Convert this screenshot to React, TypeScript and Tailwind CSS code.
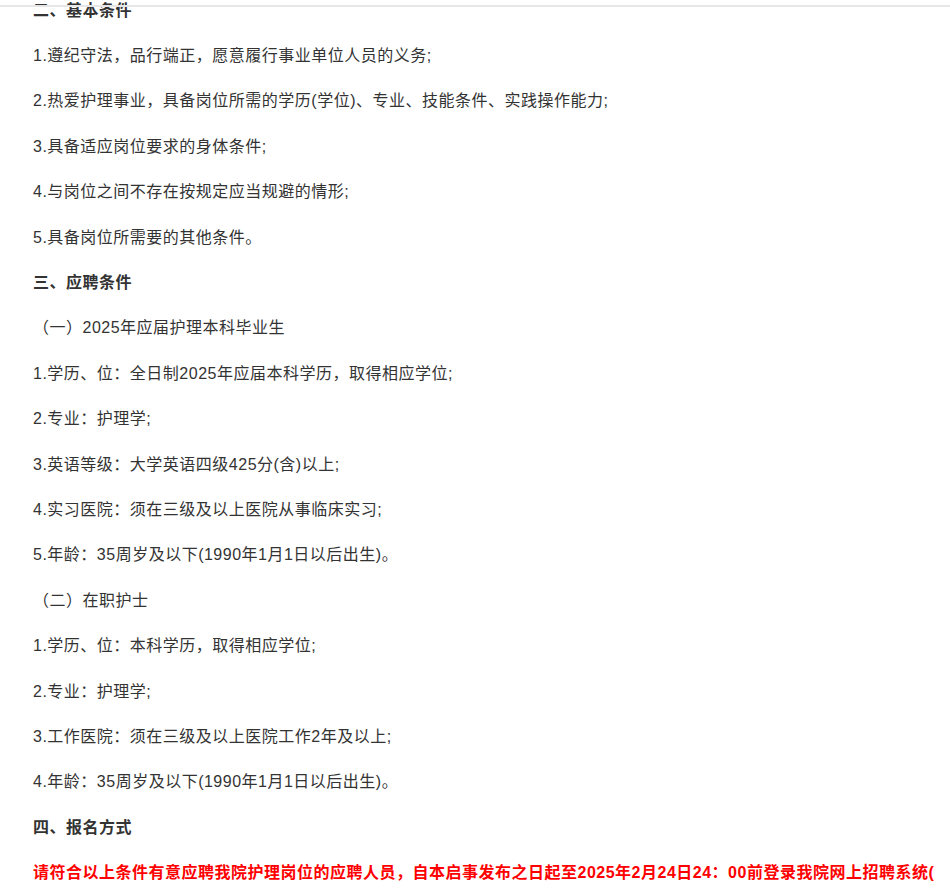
const LINES: { t: string; k?: "h" | "red" }[] = [
  { t: "二、基本条件", k: "h" },
  { t: "1.遵纪守法，品行端正，愿意履行事业单位人员的义务;" },
  { t: "2.热爱护理事业，具备岗位所需的学历(学位)、专业、技能条件、实践操作能力;" },
  { t: "3.具备适应岗位要求的身体条件;" },
  { t: "4.与岗位之间不存在按规定应当规避的情形;" },
  { t: "5.具备岗位所需要的其他条件。" },
  { t: "三、应聘条件", k: "h" },
  { t: "（一）2025年应届护理本科毕业生" },
  { t: "1.学历、位：全日制2025年应届本科学历，取得相应学位;" },
  { t: "2.专业：护理学;" },
  { t: "3.英语等级：大学英语四级425分(含)以上;" },
  { t: "4.实习医院：须在三级及以上医院从事临床实习;" },
  { t: "5.年龄：35周岁及以下(1990年1月1日以后出生)。" },
  { t: "（二）在职护士" },
  { t: "1.学历、位：本科学历，取得相应学位;" },
  { t: "2.专业：护理学;" },
  { t: "3.工作医院：须在三级及以上医院工作2年及以上;" },
  { t: "4.年龄：35周岁及以下(1990年1月1日以后出生)。" },
  { t: "四、报名方式", k: "h" },
  { t: "请符合以上条件有意应聘我院护理岗位的应聘人员，自本启事发布之日起至2025年2月24日24：00前登录我院网上招聘系统(", k: "red" },
];

export default function App() {
  return (
    <div
      className="relative h-[890px] w-[950px] overflow-hidden bg-white"
      style={{ fontFamily: '"Liberation Sans", "Noto Sans CJK SC", sans-serif' }}
    >
      <div className="absolute left-0 right-0 top-[5px] h-[2px] bg-[#e6e6e6]" />
      <div className="mt-[-12px] pl-[33px]">
        {LINES.map((l, i) => (
          <div
            key={i}
            className={
              "flex h-[45.4px] items-center whitespace-nowrap text-[16px] tracking-[0.5px] " +
              (l.k === "h"
                ? "font-bold text-[#333]"
                : l.k === "red"
                ? "font-bold text-[#ff0000] tracking-[-0.2px]"
                : "text-[#333]")
            }
          >
            {l.t}
          </div>
        ))}
      </div>
    </div>
  );
}
